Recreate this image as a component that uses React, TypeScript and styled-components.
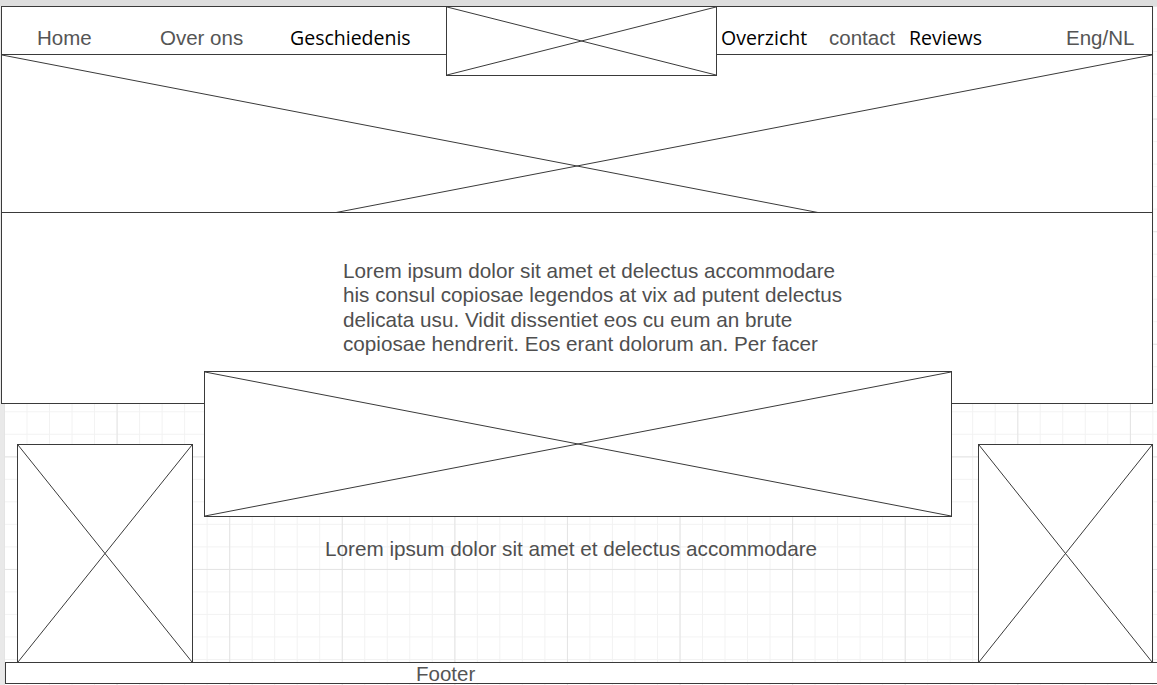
import styled, { createGlobalStyle } from 'styled-components';

const LINE = '#3a3a3a';
const SANS = '"Liberation Sans", Arial, sans-serif';
const UI_SANS = '"Open Sans", "Noto Sans", sans-serif';

const GlobalStyle = createGlobalStyle`
  html, body {
    margin: 0;
    padding: 0;
    background: #fff;
    overflow: hidden;
  }
  * {
    box-sizing: border-box;
  }
`;

const Canvas = styled.div`
  width: 1157px;
  height: 685px;
  overflow: hidden;
  display: flex;
  flex-direction: column;
`;

const TopBand = styled.div`
  flex: none;
  height: 6px;
  background: #dedede;
`;

// drawing board: grey ruler strip on the left + the editor grid
const Board = styled.div`
  flex: 1;
  background-color: #fff;
  background-image: linear-gradient(#e9e9e9, #e9e9e9),
    linear-gradient(to right, #e4e4e4 1px, transparent 1px),
    linear-gradient(to bottom, #e4e4e4 1px, transparent 1px),
    linear-gradient(to right, #f2f2f2 1px, transparent 1px),
    linear-gradient(to bottom, #f2f2f2 1px, transparent 1px);
  background-size: 4px 100%, 112.6px 112.6px, 112.6px 112.6px, 22.52px 22.52px, 22.52px 22.52px;
  background-position: 0 0, 4px 0, 4px 0, 4px 0, 4px 0;
  background-repeat: no-repeat, repeat, repeat, repeat, repeat;
`;

const NavBar = styled.nav`
  display: flex;
  align-items: flex-start;
  width: 1152px;
  height: 49px;
  margin-left: 1px;
  padding-left: 35px;
  border: 1px solid ${LINE};
  background: #fff;
`;

const NavLink = styled.a<{ $w?: number; $ml?: number; $strong?: boolean }>`
  flex: none;
  width: ${(p) => (p.$w ? `${p.$w}px` : 'auto')};
  margin-left: ${(p) => p.$ml ?? 0}px;
  padding-top: 19px;
  line-height: 24px;
  font-family: ${(p) => (p.$strong ? UI_SANS : SANS)};
  font-size: ${(p) => (p.$strong ? '19.5px' : '20.5px')};
  color: ${(p) => (p.$strong ? '#000' : '#555')};
  text-decoration: none;
  white-space: nowrap;
`;

const LogoBox = styled.div`
  position: relative;
  z-index: 2;
  flex: none;
  width: 271px;
  height: 70px;
  margin-top: -1px;
  border: 1px solid ${LINE};
  background: #fff;
`;

const Hero = styled.div`
  width: 1152px;
  height: 158px;
  margin-left: 1px;
  margin-top: -1px;
  border: 1px solid ${LINE};
  border-bottom: none;
  background: #fff;
  overflow: hidden;
`;

const TextPanel = styled.section`
  width: 1152px;
  height: 192px;
  margin-left: 1px;
  padding: 46px 0 0 341px;
  border: 1px solid ${LINE};
  background: #fff;
`;

const BodyText = styled.p`
  width: 512px;
  margin: 0;
  font-family: ${SANS};
  font-size: 20.7px;
  line-height: 24.4px;
  color: #4f4f4f;
`;

const ContentRow = styled.div`
  display: flex;
  align-items: flex-start;
  margin-top: -33px;
`;

const SideBox = styled.div<{ $ml: number; $w: number }>`
  flex: none;
  width: ${(p) => p.$w}px;
  height: 219px;
  margin-top: 73px;
  margin-left: ${(p) => p.$ml}px;
  border: 1px solid ${LINE};
  background: #fff;
`;

const CenterColumn = styled.div`
  flex: none;
  width: 748px;
  margin-left: 11px;
`;

const FeatureImage = styled.div`
  height: 146px;
  border: 1px solid ${LINE};
  background: #fff;
`;

const Caption = styled.p`
  margin: 20px 0 0;
  padding-left: 121px;
  font-family: ${SANS};
  font-size: 20.7px;
  line-height: 24.4px;
  color: #4f4f4f;
  white-space: nowrap;
`;

const Footer = styled.footer`
  width: 1160px;
  height: 22px;
  margin-left: 5px;
  margin-top: -1px;
  padding: 1px 0 0 410px;
  border: 1px solid ${LINE};
  background: #fff;
  font-family: ${SANS};
  font-size: 20.5px;
  line-height: 20px;
  color: #555;
  white-space: nowrap;
`;

const CrossSvg = styled.svg<{ $h?: number }>`
  display: block;
  width: 100%;
  height: ${(p) => (p.$h ? `${p.$h}px` : '100%')};
`;

// image placeholder: a cross from corner to corner
const Cross = ({ h }: { h?: number }) => (
  <CrossSvg $h={h} viewBox="0 0 100 100" preserveAspectRatio="none">
    <line x1="0" y1="0" x2="100" y2="100" stroke={LINE} strokeWidth="1" vectorEffect="non-scaling-stroke" />
    <line x1="100" y1="0" x2="0" y2="100" stroke={LINE} strokeWidth="1" vectorEffect="non-scaling-stroke" />
  </CrossSvg>
);

const App = () => {
  return (
    <>
      <GlobalStyle />
      <Canvas>
        <TopBand />
        <Board>
          <NavBar>
            <NavLink $w={123}>Home</NavLink>
            <NavLink $w={130}>Over ons</NavLink>
            <NavLink $w={156} $strong>
              Geschiedenis
            </NavLink>
            <LogoBox>
              <Cross />
            </LogoBox>
            <NavLink $w={108} $ml={4} $strong>
              Overzicht
            </NavLink>
            <NavLink $w={80}>contact</NavLink>
            <NavLink $w={157} $strong>
              Reviews
            </NavLink>
            <NavLink>Eng/NL</NavLink>
          </NavBar>

          <Hero>
            <Cross h={222} />
          </Hero>

          <TextPanel>
            <BodyText>
              Lorem ipsum dolor sit amet et delectus accommodare his consul copiosae legendos at vix ad putent delectus
              delicata usu. Vidit dissentiet eos cu eum an brute copiosae hendrerit. Eos erant dolorum an. Per facer
            </BodyText>
          </TextPanel>

          <ContentRow>
            <SideBox $ml={17} $w={176}>
              <Cross />
            </SideBox>
            <CenterColumn>
              <FeatureImage>
                <Cross />
              </FeatureImage>
              <Caption>Lorem ipsum dolor sit amet et delectus accommodare</Caption>
            </CenterColumn>
            <SideBox $ml={26} $w={175}>
              <Cross />
            </SideBox>
          </ContentRow>

          <Footer>Footer</Footer>
        </Board>
      </Canvas>
    </>
  );
};

export default App;
